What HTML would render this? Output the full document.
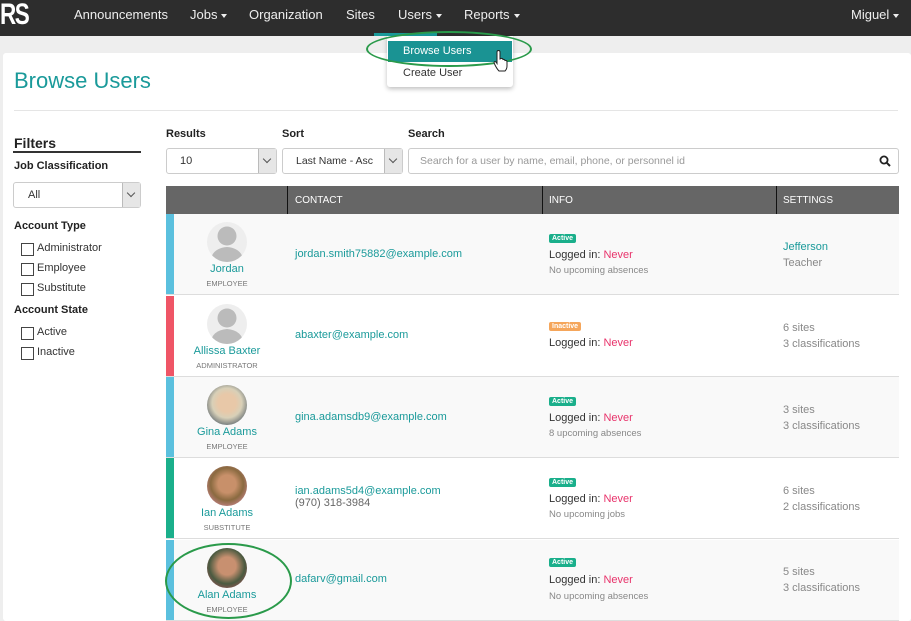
<!DOCTYPE html>
<html><head><meta charset="utf-8"><style>
*{box-sizing:border-box;margin:0;padding:0}
body{width:911px;height:621px;overflow:hidden;background:#eee;font-family:"Liberation Sans",sans-serif;position:relative;color:#333}
.a{position:absolute;white-space:nowrap}
.nav{left:0;top:0;width:911px;height:36px;background:#2d2d2d}
.nav span{position:absolute;top:7px;color:#eee;font-size:13px}
.car{display:inline-block;border-left:3.5px solid transparent;border-right:3.5px solid transparent;border-top:4px solid #eee;vertical-align:middle;margin-left:4px}
.panel{left:3px;top:53px;width:908px;height:568px;background:#fff;border-radius:3px}
.lbl{font-size:11px;font-weight:bold;color:#222}
.sel{background:#fff;border:1px solid #ccc;border-radius:3px;height:26px;font-size:11px;color:#333}
.btn{position:absolute;right:0;top:0;width:18px;height:24px;background:#e6e6e6;border-left:1px solid #bbb}
.btn:after{content:"";position:absolute;left:5px;top:7px;width:5px;height:5px;border-right:1px solid #555;border-bottom:1px solid #555;transform:rotate(45deg)}
.cb{width:13px;height:13px;border:1px solid #444;background:#fff}
.row{position:absolute;left:166px;width:733px;height:81px;border-bottom:1px solid #ddd}
.bar{position:absolute;left:0;top:0;width:8px;height:100%}
.av{position:absolute;left:41px;top:8px;width:40px;height:40px;border-radius:50%;overflow:hidden}
.nm{position:absolute;left:0;width:122px;text-align:center;top:49px;font-size:11px;color:#1a9a9a}
.rl{position:absolute;left:0;width:122px;text-align:center;top:65px;font-size:7.5px;color:#777}
.em{position:absolute;left:129px;font-size:11px;color:#1a9a9a}
.bd{position:absolute;left:383px;font-size:7px;font-weight:bold;color:#fff;padding:1px 3px;border-radius:2px}
.lg{position:absolute;left:383px;font-size:11px;color:#333}
.lg b{font-weight:normal;color:#e8336b}
.sb{position:absolute;left:383px;font-size:9.5px;color:#888}
.st{position:absolute;left:617px;font-size:11px;color:#888;line-height:16px}
</style></head><body>
<div class="a nav">
<span style="left:0;top:-2px;font-size:30px;font-weight:bold;color:#fff;letter-spacing:-2px;transform:scaleX(.75);transform-origin:left">RS</span>
<span style="left:74px">Announcements</span>
<span style="left:190px">Jobs<i class="car"></i></span>
<span style="left:249px">Organization</span>
<span style="left:346px">Sites</span>
<span style="left:398px">Users<i class="car"></i></span>
<span style="left:464px">Reports<i class="car"></i></span>
<span style="left:851px">Miguel<i class="car"></i></span>
</div>
<div class="a" style="left:374px;top:33px;width:63px;height:3px;background:#1a9a9a"></div>
<div class="a panel"></div>
<div class="a" style="left:14px;top:68px;font-size:22px;color:#1a9a9a">Browse Users</div>
<div class="a" style="left:14px;top:110px;width:884px;height:1px;background:#e5e5e5"></div>
<div class="a" style="left:387px;top:36px;width:126px;height:51px;background:#fff;box-shadow:0 2px 5px rgba(0,0,0,.25);border-radius:0 0 3px 3px"></div>
<div class="a" style="left:388px;top:41px;width:124px;height:21px;background:#1a9393;color:#fff;font-size:11px;padding:4px 0 0 15px">Browse Users</div>
<div class="a" style="left:403px;top:67px;font-size:11px;color:#333">Create User</div>
<div class="a" style="left:366px;top:31px;width:166px;height:36px;border:2px solid #2a9a4a;border-radius:50%"></div>
<svg class="a" style="left:493px;top:50px" width="16" height="22" viewBox="0 0 16 22"><path d="M4 2Q4 0.5 5.5 0.5Q7 0.5 7 2V9L8 8.5Q9.5 8 10 9.5Q11.5 9 12 10.5Q13.5 10 14 11.5V16Q14 19 12 21H6Q4 19 2 15L1 12.5Q1.5 11 3 12L4 13.5Z" fill="#fff" stroke="#222" stroke-width="1"/></svg>

<div class="a" style="left:14px;top:135px;font-size:14px;font-weight:bold;color:#222">Filters</div>
<div class="a" style="left:13px;top:151px;width:128px;height:2px;background:#333"></div>
<div class="a lbl" style="left:14px;top:160px">Job Classification</div>
<div class="a sel" style="left:13px;top:182px;width:128px"><span style="position:absolute;left:14px;top:6px">All</span><div class="btn"></div></div>
<div class="a lbl" style="left:14px;top:220px">Account Type</div>
<div class="a cb" style="left:21px;top:243px"></div><div class="a" style="left:37px;top:242px;font-size:11px">Administrator</div>
<div class="a cb" style="left:21px;top:263px"></div><div class="a" style="left:37px;top:262px;font-size:11px">Employee</div>
<div class="a cb" style="left:21px;top:283px"></div><div class="a" style="left:37px;top:282px;font-size:11px">Substitute</div>
<div class="a lbl" style="left:14px;top:304px">Account State</div>
<div class="a cb" style="left:21px;top:327px"></div><div class="a" style="left:37px;top:326px;font-size:11px">Active</div>
<div class="a cb" style="left:21px;top:347px"></div><div class="a" style="left:37px;top:346px;font-size:11px">Inactive</div>

<div class="a lbl" style="left:166px;top:128px">Results</div>
<div class="a lbl" style="left:282px;top:128px">Sort</div>
<div class="a lbl" style="left:408px;top:128px">Search</div>
<div class="a sel" style="left:166px;top:148px;width:111px"><span style="position:absolute;left:13px;top:6px">10</span><div class="btn"></div></div>
<div class="a sel" style="left:282px;top:148px;width:121px"><span style="position:absolute;left:13px;top:6px;font-size:10.5px">Last Name - Asc</span><div class="btn"></div></div>
<div class="a sel" style="left:408px;top:148px;width:491px"><span style="position:absolute;left:11px;top:6px;color:#999;font-size:10.5px">Search for a user by name, email, phone, or personnel id</span>
<svg style="position:absolute;right:7px;top:6px" width="12" height="12" viewBox="0 0 12 12"><circle cx="5" cy="5" r="3.6" fill="none" stroke="#222" stroke-width="1.8"/><path d="M7.6 7.6L11 11" stroke="#222" stroke-width="2"/></svg></div>

<div class="a" style="left:166px;top:186px;width:733px;height:28px;background:#666;color:#fff;font-size:10px">
<div style="position:absolute;left:121px;top:0;width:1px;height:28px;background:#111"></div>
<div style="position:absolute;left:376px;top:0;width:1px;height:28px;background:#111"></div>
<div style="position:absolute;left:610px;top:0;width:1px;height:28px;background:#111"></div>
<span style="position:absolute;left:129px;top:9px">CONTACT</span>
<span style="position:absolute;left:383px;top:9px">INFO</span>
<span style="position:absolute;left:617px;top:9px">SETTINGS</span>
</div>

<div class="row" style="top:214px;background:#f9f9f9"><div class="bar" style="background:#5bc0de"></div>
<div class="av" style="background:#eee"><svg width="40" height="40"><circle cx="20" cy="14" r="9.5" fill="#bbb"/><path d="M3 40Q5 26 20 25Q35 26 37 40Z" fill="#bbb"/></svg></div>
<div class="nm">Jordan</div><div class="rl">EMPLOYEE</div>
<div class="em" style="top:34px">jordan.smith75882@example.com</div>
<div class="bd" style="top:20px;background:#1aaf8b">Active</div>
<div class="lg" style="top:35px">Logged in: <b>Never</b></div>
<div class="sb" style="top:51px">No upcoming absences</div>
<div class="st" style="top:25px"><span style="color:#1a9a9a">Jefferson</span><br>Teacher</div></div>

<div class="row" style="top:296px;background:#fff"><div class="bar" style="background:#ef5566"></div>
<div class="av" style="background:#eee"><svg width="40" height="40"><circle cx="20" cy="14" r="9.5" fill="#bbb"/><path d="M3 40Q5 26 20 25Q35 26 37 40Z" fill="#bbb"/></svg></div>
<div class="nm">Allissa Baxter</div><div class="rl">ADMINISTRATOR</div>
<div class="em" style="top:33px">abaxter@example.com</div>
<div class="bd" style="top:26px;background:#f5a65b">Inactive</div>
<div class="lg" style="top:41px">Logged in: <b>Never</b></div>
<div class="st" style="top:24px">6 sites<br>3 classifications</div></div>

<div class="row" style="top:377px;background:#f9f9f9"><div class="bar" style="background:#5bc0de"></div>
<div class="av" style="background:radial-gradient(circle at 50% 45%,#e8c8a8 30%,#d8d0b8 50%,#3a4a5a 90%)"></div>
<div class="nm">Gina Adams</div><div class="rl">EMPLOYEE</div>
<div class="em" style="top:34px">gina.adamsdb9@example.com</div>
<div class="bd" style="top:20px;background:#1aaf8b">Active</div>
<div class="lg" style="top:35px">Logged in: <b>Never</b></div>
<div class="sb" style="top:51px">8 upcoming absences</div>
<div class="st" style="top:25px">3 sites<br>3 classifications</div></div>

<div class="row" style="top:458px;background:#fff"><div class="bar" style="background:#1aaf8b"></div>
<div class="av" style="background:radial-gradient(circle at 50% 45%,#c8906a 30%,#8a6a40 55%,#d88aa0 90%)"></div>
<div class="nm">Ian Adams</div><div class="rl">SUBSTITUTE</div>
<div class="em" style="top:27px">ian.adams5d4@example.com<br><span style="color:#666">(970) 318-3984</span></div>
<div class="bd" style="top:20px;background:#1aaf8b">Active</div>
<div class="lg" style="top:35px">Logged in: <b>Never</b></div>
<div class="sb" style="top:51px">No upcoming jobs</div>
<div class="st" style="top:25px">6 sites<br>2 classifications</div></div>

<div class="row" style="top:540px;background:#f9f9f9;height:81px"><div class="bar" style="background:#5bc0de"></div>
<div class="av" style="background:radial-gradient(circle at 50% 45%,#c89070 30%,#4a5a40 60%,#a8505a 90%)"></div>
<div class="nm">Alan Adams</div><div class="rl">EMPLOYEE</div>
<div class="em" style="top:33px">dafarv@gmail.com</div>
<div class="bd" style="top:18px;background:#1aaf8b">Active</div>
<div class="lg" style="top:34px">Logged in: <b>Never</b></div>
<div class="sb" style="top:51px">No upcoming absences</div>
<div class="st" style="top:24px">5 sites<br>3 classifications</div></div>
<div class="a" style="left:165px;top:543px;width:127px;height:76px;border:2px solid #2a9a4a;border-radius:50%"></div>
</body></html>
